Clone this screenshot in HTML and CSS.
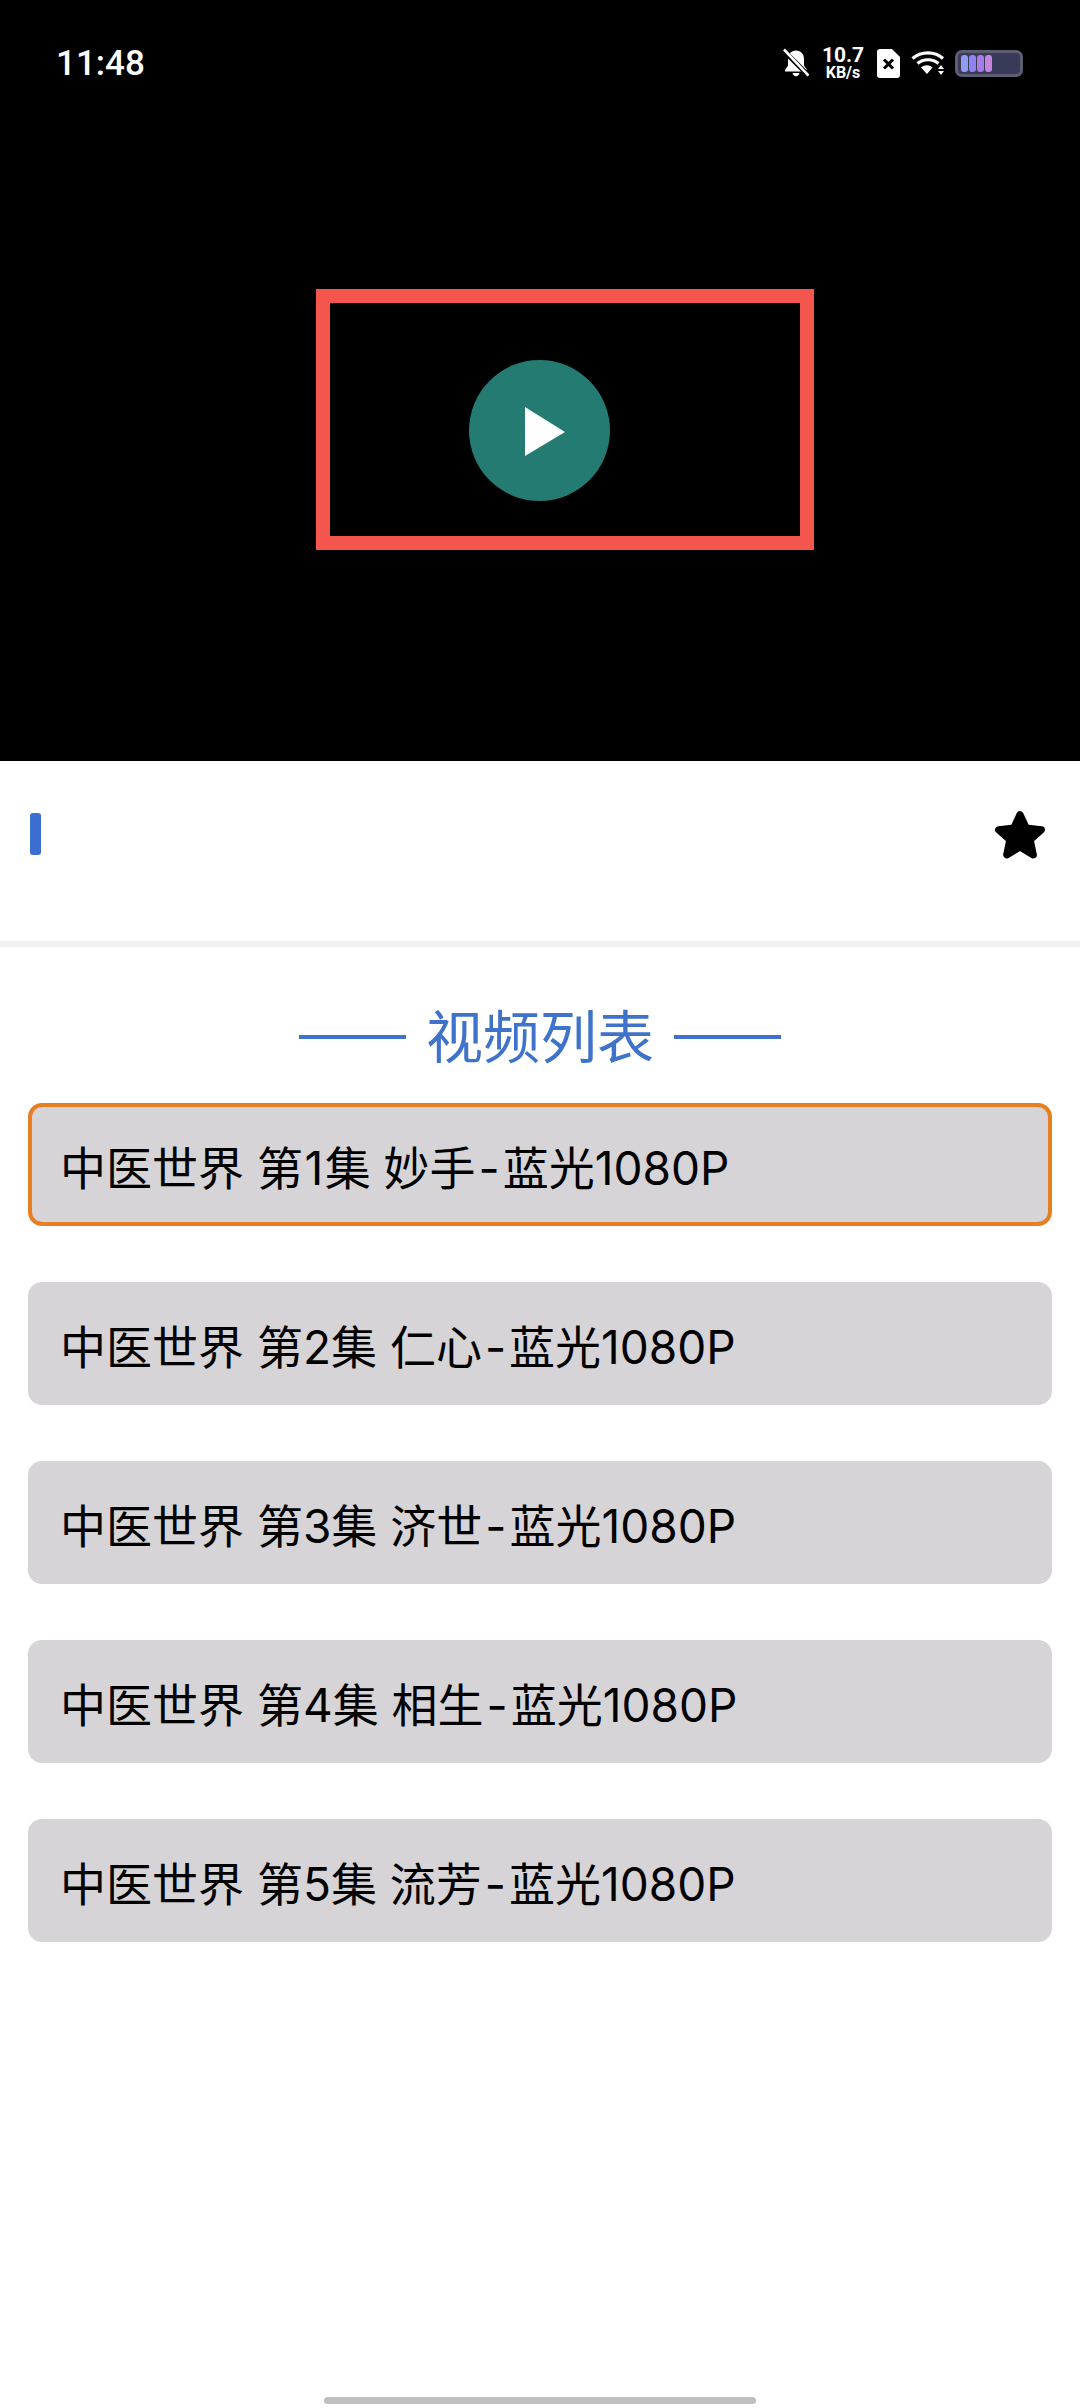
FILE: index.html
```html
<!DOCTYPE html>
<html lang="zh-CN">
<head>
<meta charset="utf-8">
<title>视频列表</title>
<link rel="stylesheet" href="styles.css">
</head>
<body>
<div class="page">
  <section class="video">
    <header class="status">
      <span class="time">11:48</span>
      <div class="status-icons">
        <svg class="ic-bell" viewBox="0 0 26 30" width="26" height="30"><path fill="#fff" d="M13 2.500c-5 0-8 3.600-8 8.500v6.500l-3 4.500v1.500h22v-1.500l-3-4.500V11c0-4.900-3-8.500-8-8.500z"/><path fill="#fff" d="M9.500 25h7c-.3 2-1.700 3.200-3.500 3.200S9.800 27 9.500 25z"/><path stroke="#000" stroke-width="5" d="M1 3l24 24"/><path stroke="#fff" stroke-width="2.600" d="M1 1.500l24.500 26"/></svg>
        <div class="speed"><span class="speed-num">10.7</span><span class="speed-unit">KB/s</span></div>
        <svg class="ic-sim" viewBox="0 0 23 29" width="23" height="29"><path fill="#fff" d="M3 0h12l8 8v18a3 3 0 0 1-3 3H3a3 3 0 0 1-3-3V3a3 3 0 0 1 3-3z"/><path stroke="#000" stroke-width="3" d="M7 10.500l9 9M16 10.500l-9 9"/></svg>
        <svg class="ic-wifi" viewBox="0 0 34 26" width="34" height="26"><g fill="none" stroke="#fff" stroke-width="3.200"><path d="M1.500 8.500C10 1 24 1 32 8.500"/><path d="M6.500 13.500c6-5 15-5 21 0"/></g><path fill="#fff" d="M10 17.500c3.500-3 8-3 11.500 0L16 24z"/><path fill="#fff" d="M30 15l3 4h-6zM30 25l-3-4h6z"/></svg>
        <div class="battery"><span class="cell c1"></span><span class="cell c2"></span><span class="cell c3"></span><span class="cell c4"></span></div>
      </div>
    </header>
    <div class="frame"></div>
    <div class="play">
      <svg viewBox="0 0 40 49" width="40" height="49"><path fill="#fff" d="M0 0l40 25L0 49z"/></svg>
    </div>
  </section>

  <section class="info">
    <span class="mark"></span>
    <svg class="star" viewBox="0 0 50 48" width="52" height="50"><path fill="#000" stroke="#000" stroke-width="7" stroke-linejoin="round" d="M25 4.500l6 13 14.500 1.500-10.800 9.600 3 14.400L25 35.500 12.300 43l3-14.400L4.500 19 19 17.500z"/></svg>
  </section>

  <section class="list">
    <h2 class="list-title"><span class="rule"></span><span>视频列表</span><span class="rule"></span></h2>
    <ul class="items">
      <li class="item active"><span>中医世界 第<span class="one">1</span>集 妙手<span class="dash">-</span>蓝光1080P</span></li>
      <li class="item"><span>中医世界 第2集 仁心<span class="dash">-</span>蓝光1080P</span></li>
      <li class="item"><span>中医世界 第3集 济世<span class="dash">-</span>蓝光1080P</span></li>
      <li class="item"><span>中医世界 第4集 相生<span class="dash">-</span>蓝光1080P</span></li>
      <li class="item"><span>中医世界 第5集 流芳<span class="dash">-</span>蓝光1080P</span></li>
    </ul>
  </section>

  <div class="home-bar"></div>
</div>
</body>
</html>
```

FILE: styles.css
```css
* { box-sizing: border-box; }
html, body { margin: 0; padding: 0; background: #fff; }
body { font-family: "Inter", "Noto Sans CJK SC", "Noto Sans", sans-serif; }
.page { width: 1080px; height: 2408px; display: flex; flex-direction: column; position: relative; overflow: hidden; }

.video { height: 761px; background: #000; position: relative; flex: none; }
.status { display: flex; justify-content: space-between; align-items: center; height: 50px; margin-top: 38px; padding: 0 57px 0 56px; position: absolute; top: 0; left: 0; right: 0; color: #fff; }
.time { font-family: "Roboto", sans-serif; font-weight: 500; font-size: 35px; }
.status-icons { display: flex; align-items: center; }
.ic-bell { margin-right: 13px; }
.speed { display: flex; flex-direction: column; align-items: center; width: 42px; margin-right: 13px; font-family: "Roboto", sans-serif; font-weight: 700; line-height: 1; }
.speed-num { font-size: 21px; height: 20px; }
.speed-unit { font-size: 16px; height: 16px; }
.ic-sim { margin-right: 11px; }
.ic-wifi { margin-right: 10px; }
.battery { width: 68px; height: 27px; border: 3px solid #5d5d73; border-radius: 7px; background: #383a58; display: flex; gap: 1px; padding: 2px 3px; }
.cell { width: 7px; border-radius: 3px; }
.c1 { background: #8f9cf0; }
.c2 { background: #8f84ee; }
.c3 { background: #a87ce4; }
.c4 { background: #c585dd; }

.frame { position: absolute; left: 316px; top: 289px; width: 498px; height: 261px; border: 14px solid #f4564d; }
.play { position: absolute; left: 469px; top: 360px; width: 141px; height: 141px; border-radius: 50%; background: #237b72; display: flex; align-items: center; justify-content: center; padding-left: 11px; padding-top: 1px; }

.info { height: 186px; flex: none; display: flex; justify-content: space-between; align-items: flex-start; padding: 52px 34px 0 30px; border-bottom: 6px solid #f0f0f0; }
.mark { width: 11px; height: 42px; background: #3a6fd0; border-radius: 3px; }
.star { margin-top: -3px; }

.list { padding: 0 28px; flex: none; }
.list-title { margin: 0; height: 156px; display: flex; align-items: center; justify-content: center; gap: 20px; font-size: 57px; font-weight: 400; line-height: 1; color: #3f73c9; padding-top: 24px; }
.rule { width: 107px; height: 4px; background: #3f73c9; }
.items { list-style: none; margin: 0; padding: 0; display: flex; flex-direction: column; gap: 56px; }
.item { height: 123px; background: #d6d4d6; border-radius: 14px; display: flex; align-items: center; padding-left: 32px; font-size: 46px; color: #000; white-space: pre; }
.item.active { border: 4px solid #e67e22; padding-left: 28px; }
.dash { margin: 0 3px; }
.one { margin: 0 1.500px; }

.home-bar { position: absolute; left: 324px; bottom: 0; width: 432px; height: 7px; margin-bottom: 4px; border-radius: 4px; background: #bfbfbf; }
```
